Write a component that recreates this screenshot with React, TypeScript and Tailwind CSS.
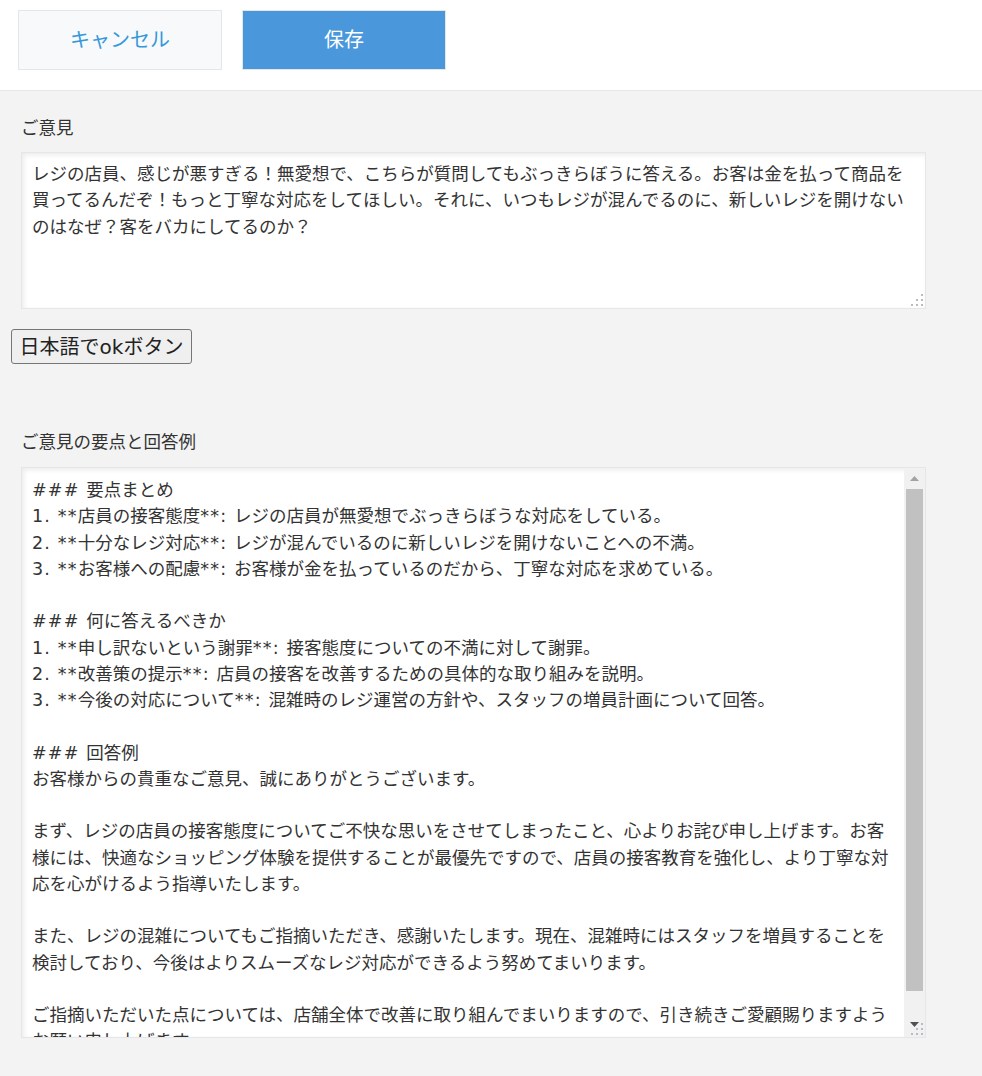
import React from "react";

const FONT = { fontFamily: '"DejaVu Sans", "Noto Sans CJK JP", sans-serif' };

const opinion = [
  "レジの店員、感じが悪すぎる！無愛想で、こちらが質問してもぶっきらぼうに答える。お客は金を払って商品を",
  "買ってるんだぞ！もっと丁寧な対応をしてほしい。それに、いつもレジが混んでるのに、新しいレジを開けない",
  "のはなぜ？客をバカにしてるのか？",
];

const answer = [
  "### 要点まとめ",
  "1. **店員の接客態度**: レジの店員が無愛想でぶっきらぼうな対応をしている。",
  "2. **十分なレジ対応**: レジが混んでいるのに新しいレジを開けないことへの不満。",
  "3. **お客様への配慮**: お客様が金を払っているのだから、丁寧な対応を求めている。",
  "",
  "### 何に答えるべきか",
  "1. **申し訳ないという謝罪**: 接客態度についての不満に対して謝罪。",
  "2. **改善策の提示**: 店員の接客を改善するための具体的な取り組みを説明。",
  "3. **今後の対応について**: 混雑時のレジ運営の方針や、スタッフの増員計画について回答。",
  "",
  "### 回答例",
  "お客様からの貴重なご意見、誠にありがとうございます。",
  "",
  "まず、レジの店員の接客態度についてご不快な思いをさせてしまったこと、心よりお詫び申し上げます。お客",
  "様には、快適なショッピング体験を提供することが最優先ですので、店員の接客教育を強化し、より丁寧な対",
  "応を心がけるよう指導いたします。",
  "",
  "また、レジの混雑についてもご指摘いただき、感謝いたします。現在、混雑時にはスタッフを増員することを",
  "検討しており、今後はよりスムーズなレジ対応ができるよう努めてまいります。",
  "",
  "ご指摘いただいた点については、店舗全体で改善に取り組んでまいりますので、引き続きご愛顧賜りますよう",
  "お願い申し上げます。",
];

function Grip() {
  return (
    <svg width="12" height="12" viewBox="0 0 12 12" className="block">
      <rect x="10" y="0" width="2" height="2" fill="#b8bcc0" />
      <rect x="5" y="5" width="2" height="2" fill="#b8bcc0" />
      <rect x="10" y="5" width="2" height="2" fill="#b8bcc0" />
      <rect x="0" y="10" width="2" height="2" fill="#b8bcc0" />
      <rect x="5" y="10" width="2" height="2" fill="#b8bcc0" />
      <rect x="10" y="10" width="2" height="2" fill="#b8bcc0" />
    </svg>
  );
}

// ASCII runs get a little extra spacing so they read as wide as the original UI font
function Line({ text }: { text: string }) {
  const parts = text.split(/([\x20-\x7e]+)/).filter((p) => p !== "");
  return (
    <div className="whitespace-pre h-[26.25px]">
      {parts.map((p, i) =>
        /^[\x20-\x7e]+$/.test(p) ? (
          <span key={i} className="tracking-[1.2px]">
            {p}
          </span>
        ) : (
          <span key={i}>{p}</span>
        )
      )}
    </div>
  );
}

export default function App() {
  return (
    <div className="min-h-[1076px] bg-[#f3f3f3] text-[#333]" style={FONT}>
      {/* Header buttons */}
      <div className="h-[91px] bg-white border-b border-[#e3e7e8] flex gap-[20px] pl-[18px] pt-[10px]">
        <button className="w-[204px] h-[60px] bg-[#f7f9fa] border border-[#e3e7e8] text-[#3498db] text-[20px]">
          キャンセル
        </button>
        <button className="w-[204px] h-[60px] bg-[#4a98db] border border-[#e3e7e8] text-white text-[20px]">
          保存
        </button>
      </div>

      <div className="px-[21px] pt-[24px] text-[17.5px] leading-[26.25px]">
        <div className="h-[26px]">ご意見</div>

        {/* Opinion textarea */}
        <div className="relative mt-[11px] w-[905px] h-[157px] bg-white border border-[#e3e7e8] shadow-[inset_2px_2px_5px_#ececec] pl-[10px] pt-[8px] overflow-hidden">
          {opinion.map((l, i) => (
            <Line key={i} text={l} />
          ))}
          <div className="absolute right-[2px] bottom-[2px]">
            <Grip />
          </div>
        </div>

        <button className="mt-[20px] -ml-[10px] h-[35px] w-[181px] bg-[#efefef] border border-[#767676] rounded-[3px] text-[20px] text-[#222] leading-none">
          日本語でokボタン
        </button>

        <div className="mt-[65px] h-[26px]">ご意見の要点と回答例</div>

        {/* Answer textarea with scrollbar */}
        <div className="relative mt-[12px] w-[905px] h-[571px] bg-white border border-[#e3e7e8] shadow-[inset_2px_2px_5px_#ececec] flex overflow-hidden">
          <div className="flex-1 pl-[10px] pt-[9px] overflow-hidden">
            {answer.map((l, i) => (
              <Line key={i} text={l} />
            ))}
          </div>
          <div className="w-[21px] bg-[#f1f1f1] flex flex-col items-center">
            <div className="h-[21px] flex items-center justify-center">
              <svg width="9" height="5" viewBox="0 0 9 5">
                <path d="M0 5 L4.5 0 L9 5 Z" fill="#a3a3a3" />
              </svg>
            </div>
            <div className="w-[17px] h-[502px] bg-[#c1c1c1]" />
            <div className="flex-1" />
            <div className="h-[21px] flex items-start justify-center pt-[6px]">
              <svg width="9" height="5" viewBox="0 0 9 5">
                <path d="M0 0 L9 0 L4.5 5 Z" fill="#505050" />
              </svg>
            </div>
          </div>
          <div className="absolute right-[2px] bottom-[2px]">
            <Grip />
          </div>
        </div>
      </div>
    </div>
  );
}
